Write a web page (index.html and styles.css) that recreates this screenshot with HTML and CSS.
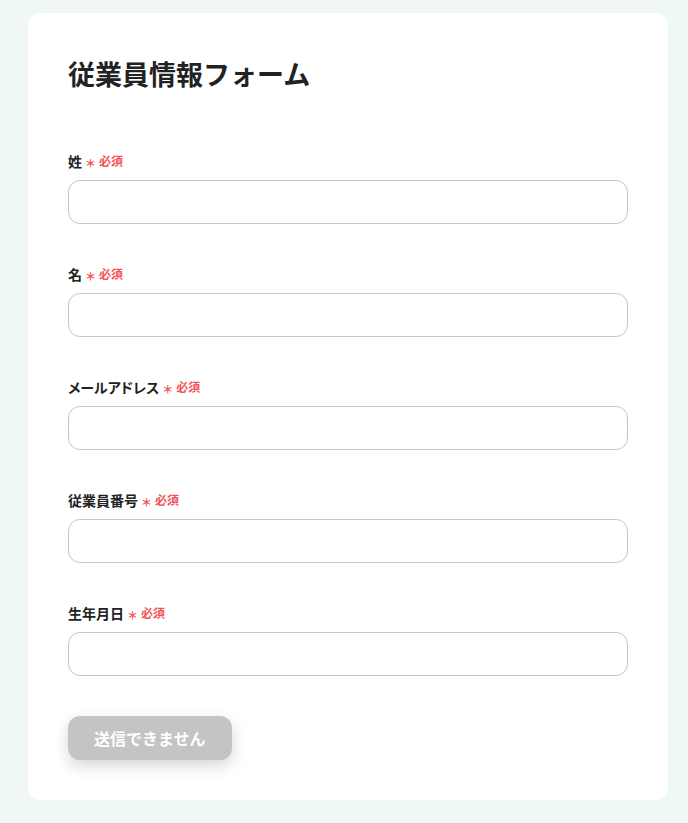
FILE: index.html
```html
<!DOCTYPE html>
<html lang="ja">
<head>
<meta charset="utf-8">
<link rel="stylesheet" href="styles.css">
</head>
<body>
<div class="page">
  <form class="card">
    <h1 class="title">従業員情報フォーム</h1>
    <div class="fields">
      <div class="field">
        <label class="label">姓<span class="req"><span class="ast">＊</span>必須</span></label>
        <input class="input" type="text">
      </div>
      <div class="field">
        <label class="label">名<span class="req"><span class="ast">＊</span>必須</span></label>
        <input class="input" type="text">
      </div>
      <div class="field">
        <label class="label">メールアドレス<span class="req"><span class="ast">＊</span>必須</span></label>
        <input class="input" type="text">
      </div>
      <div class="field">
        <label class="label">従業員番号<span class="req"><span class="ast">＊</span>必須</span></label>
        <input class="input" type="text">
      </div>
      <div class="field">
        <label class="label">生年月日<span class="req"><span class="ast">＊</span>必須</span></label>
        <input class="input" type="text">
      </div>
    </div>
    <button class="submit" type="button" disabled>送信できません</button>
  </form>
</div>
</body>
</html>
```

FILE: styles.css
```css
html, body {
  margin: 0;
  padding: 0;
  background: #f0f8f7;
}
body {
  font-family: "Noto Sans CJK JP", "Noto Sans", sans-serif;
  color: #222;
}
.page {
  padding: 13px 20px 23px 28px;
}
.card {
  width: 640px;
  box-sizing: border-box;
  background: #fff;
  border-radius: 12px;
  padding: 40px;
  display: flex;
  flex-direction: column;
  align-items: flex-start;
}
.title {
  margin: 0 0 56px;
  font-size: 27px;
  line-height: 42px;
  font-weight: 700;
  color: #222;
}
.fields {
  display: flex;
  flex-direction: column;
  gap: 40px;
  width: 100%;
}
.field {
  display: flex;
  flex-direction: column;
  gap: 9px;
}
.label {
  height: 20px;
  font-size: 14px;
  line-height: 20px;
  font-weight: 700;
  color: #222;
  display: flex;
  align-items: center;
  font-feature-settings: "palt";
}
.req {
  color: #f05454;
  font-size: 12px;
  line-height: 20px;
  font-weight: 700;
  margin-left: 3px;
  display: flex;
  align-items: center;
  font-feature-settings: normal;
}
.ast {
  font-size: 11px;
  line-height: 20px;
  margin-right: 3px;
  margin-top: 3px;
}
.input {
  box-sizing: border-box;
  width: 100%;
  height: 44px;
  border: 1px solid #c6c6c6;
  border-radius: 12px;
  background: #fff;
  padding: 0 14px;
  font-size: 16px;
  outline: none;
}
.submit {
  margin-top: 40px;
  height: 44px;
  padding: 0 26px;
  border: none;
  border-radius: 12px;
  background: #c4c4c4;
  color: #fff;
  font-family: inherit;
  font-size: 16px;
  font-weight: 700;
  box-shadow: 0 6px 16px rgba(0, 0, 0, 0.16);
}
```
